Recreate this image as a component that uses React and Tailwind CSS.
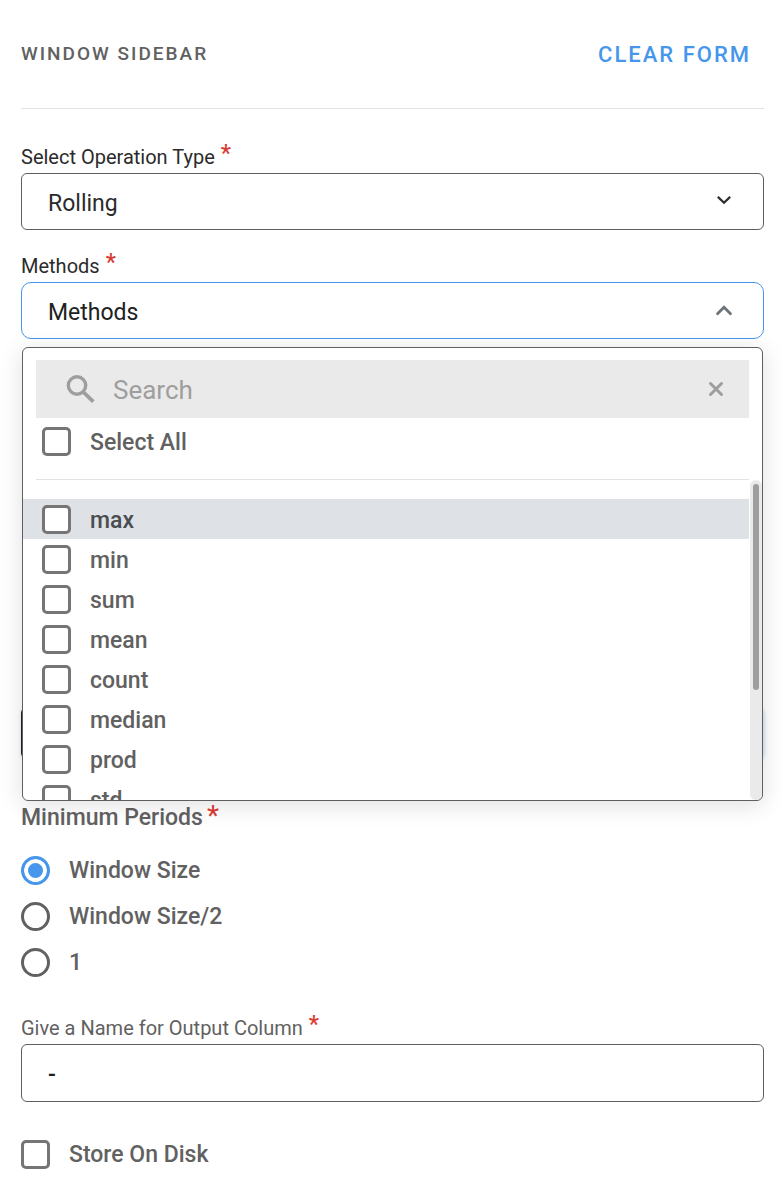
import { useState } from "react";

const METHODS = ["max", "min", "sum", "mean", "count", "median", "prod", "std"];

const PERIODS = [
  { value: "window", label: "Window Size" },
  { value: "half", label: "Window Size/2" },
  { value: "one", label: "1" },
];

const boxClass =
  "size-[29px] shrink-0 appearance-none rounded-[5px] border-3 border-[#757575] bg-white checked:bg-[#4696ec]";

function Required() {
  return (
    <span className="ml-[6px] text-[23px] leading-[23px] font-medium text-[#d93a34]">*</span>
  );
}

function FieldLabel({ htmlFor, className, children }) {
  return (
    <label htmlFor={htmlFor} className={`mb-[3px] flex h-7 items-start ${className}`}>
      <span className="text-[20px] leading-[30px]">{children}</span>
      <Required />
    </label>
  );
}

function MethodOption({ label, active, checked, onChange }) {
  return (
    <label
      className={`flex h-10 items-center gap-[19px] pl-[19px] ${
        active ? "bg-[#dee1e6] text-[#4b4d50]" : "text-[#616161]"
      }`}
    >
      <input type="checkbox" className={boxClass} checked={checked} onChange={onChange} />
      <span className="pt-[3px] text-[23px] leading-7 font-medium">{label}</span>
    </label>
  );
}

export default function WindowSidebar() {
  const [operation, setOperation] = useState("Rolling");
  const [open, setOpen] = useState(true);
  const [search, setSearch] = useState("");
  const [methods, setMethods] = useState([]);
  const [period, setPeriod] = useState("window");
  const [output, setOutput] = useState("-");
  const [store, setStore] = useState(false);

  const visible = METHODS.filter((m) => m.includes(search.toLowerCase()));
  const allSelected = methods.length === METHODS.length;

  const toggle = (m) =>
    setMethods((list) => (list.includes(m) ? list.filter((x) => x !== m) : [...list, m]));

  return (
    <form
      className="bg-white pr-[18px] pb-[21px] pl-[21px] font-[Roboto,sans-serif] text-[#616161]"
      onSubmit={(e) => e.preventDefault()}
    >
      <header className="flex h-[109px] items-center justify-between border-b border-[#e2e2e2] pr-[13px]">
        <h1 className="text-[19px] font-medium tracking-[2px]">WINDOW SIDEBAR</h1>
        <button type="reset" className="text-[22px] font-medium tracking-[2px] text-[#4696ec]">
          CLEAR FORM
        </button>
      </header>

      {/* Operation type */}
      <div className="mt-[33px]">
        <FieldLabel htmlFor="operation" className="text-[#2b2b2b]">
          Select Operation Type
        </FieldLabel>
        <div className="relative">
          <select
            id="operation"
            value={operation}
            onChange={(e) => setOperation(e.target.value)}
            className="block h-[57px] w-full appearance-none rounded-[6px] border border-[#5f5f5f] bg-white px-[26px] pt-[5px] text-[23px] text-[#2b2b2b]"
          >
            <option>Rolling</option>
          </select>
          <svg
            className="pointer-events-none absolute top-[19px] right-8 size-4"
            viewBox="0 0 16 16"
            fill="none"
            stroke="#2f2f2f"
            strokeWidth="2.2"
          >
            <path d="M2.4 5.4 8 10.8l5.6-5.4" strokeLinecap="round" />
          </svg>
        </div>
      </div>

      {/* Methods multi select */}
      <div className="relative mt-[21px]">
        <FieldLabel htmlFor="methods" className="text-[#2b2b2b]">
          Methods
        </FieldLabel>
        <button
          id="methods"
          type="button"
          aria-expanded={open}
          onClick={() => setOpen(!open)}
          className="flex h-[57px] w-full items-center justify-between rounded-[10px] border border-[#4696ec] bg-white pr-[30px] pl-[26px] text-[23px] text-[#212121]"
        >
          <span className="pt-[5px]">Methods</span>
          <svg className="h-4 w-[18px]" viewBox="0 0 18 16" fill="none" stroke="#6c737a" strokeWidth="2.8">
            <path d="m2.500 10.800 6.500-6.500 6.500 6.500" strokeLinecap="round" />
          </svg>
        </button>

        {open && (
          <div className="absolute inset-x-px top-full z-10 mt-2 flex h-[454px] flex-col overflow-hidden rounded-[6px] border border-[#5f5f5f] bg-white pt-3 shadow-[0_4px_24px_rgba(0,0,0,0.13)]">
            <div className="mx-[13px] flex h-[58px] shrink-0 items-center bg-[#eaeaea] pr-[25px] pl-[30px]">
              <svg className="size-[29px] shrink-0" viewBox="0 0 29 29" fill="none" stroke="#9e9e9e">
                <circle cx="11" cy="10.5" r="8.7" strokeWidth="3.4" />
                <path d="m17.300 17 10 9.600" strokeWidth="3.8" />
              </svg>
              <input
                type="text"
                aria-label="Search"
                placeholder="Search"
                value={search}
                onChange={(e) => setSearch(e.target.value)}
                className="ml-[18px] min-w-0 grow bg-transparent pt-[3px] text-[26px] placeholder:text-[#9e9e9e]"
              />
              <button type="button" aria-label="Clear search" onClick={() => setSearch("")}>
                <svg className="size-4" viewBox="0 0 16 16" fill="none" stroke="#9e9e9e" strokeWidth="3">
                  <path d="m2.500 2.500 11 11m0-11-11 11" strokeLinecap="round" />
                </svg>
              </button>
            </div>

            <div className="h-[62px] shrink-0 pt-[3px]">
              <MethodOption
                label="Select All"
                checked={allSelected}
                onChange={() => setMethods(allSelected ? [] : METHODS)}
              />
            </div>
            <hr className="mx-[13px] -mt-px shrink-0 border-[#e2e2e2]" />

            <div className="flex min-h-0 grow">
              <div className="grow overflow-hidden pt-[19px]">
                {visible.map((m, i) => (
                  <MethodOption
                    key={m}
                    label={m}
                    active={i === 0}
                    checked={methods.includes(m)}
                    onChange={() => toggle(m)}
                  />
                ))}
              </div>
              <div className="ml-px w-3 rounded-full bg-[#eaeaea] px-[3px] pt-1">
                <div className="h-[206px] rounded-full bg-[#9e9e9e]" />
              </div>
            </div>
          </div>
        )}
      </div>

      {/* Window size */}
      <div className="flex h-[464px] flex-col justify-end pr-px pb-11">
        <input
          type="text"
          aria-label="Window"
          className="h-[52px] w-full rounded-[6px] border border-[#212121] bg-white px-[26px] shadow-[1px_1px_4px_#c3d6f0]"
        />
      </div>

      {/* Minimum periods */}
      <fieldset>
        <legend className="flex h-7 items-start">
          <span className="text-[23px] leading-[30px] font-medium">Minimum Periods</span>
          <span className="ml-1 text-[28px] leading-[26px] text-[#d93a34]">*</span>
        </legend>
        <div className="mt-[25px] flex flex-col gap-[17px]">
          {PERIODS.map((p) => (
            <label key={p.value} className="flex h-[29px] items-center gap-[19px]">
              <input
                type="radio"
                name="period"
                checked={period === p.value}
                onChange={() => setPeriod(p.value)}
                className="size-[29px] shrink-0 appearance-none rounded-full border-3 border-[#616161] bg-white checked:border-[#4696ec] checked:bg-[#4696ec] checked:shadow-[inset_0_0_0_4px_#fff]"
              />
              <span className="text-[23px] leading-7 font-medium">{p.label}</span>
            </label>
          ))}
        </div>
      </fieldset>

      {/* Output column */}
      <div className="mt-9">
        <FieldLabel htmlFor="output">Give a Name for Output Column</FieldLabel>
        <input
          id="output"
          type="text"
          value={output}
          onChange={(e) => setOutput(e.target.value)}
          className="block h-[58px] w-full rounded-[6px] border border-[#5f5f5f] bg-white px-[26px] pt-[3px] text-[23px] font-medium text-[#212121]"
        />
      </div>

      <label className="mt-[38px] flex h-[29px] items-center gap-[19px]">
        <input
          type="checkbox"
          className={boxClass}
          checked={store}
          onChange={(e) => setStore(e.target.checked)}
        />
        <span className="text-[23px] leading-7 font-medium">Store On Disk</span>
      </label>
    </form>
  );
}
